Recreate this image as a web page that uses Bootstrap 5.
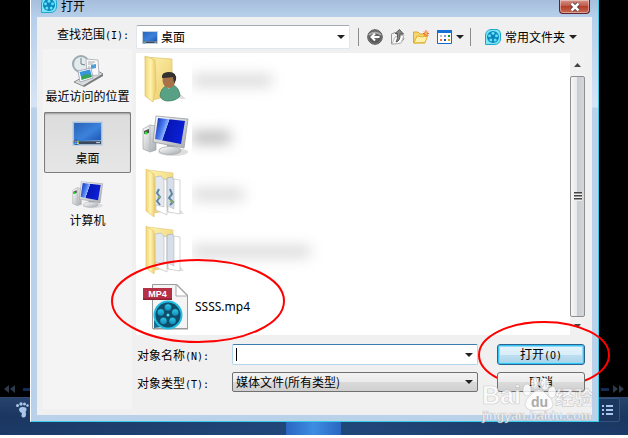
<!DOCTYPE html>
<html lang="zh-CN">
<head>
<meta charset="utf-8">
<meta name="viewport" content="width=device-width, initial-scale=1">
<title>打开</title>
<link href="https://cdn.jsdelivr.net/npm/bootstrap@5.3.0/dist/css/bootstrap.min.css" rel="stylesheet">
<style>
body{font:12px/16px "Noto Sans CJK SC",sans-serif;color:#000;background:#fff}
svg{display:block;flex:none}
button,.btn{font-size:12px;line-height:16px;color:#000}
.desk{display:grid;background:#000}
.desk>*,.deck>*{grid-area:1/1;min-width:0}
.key{font-family:"DejaVu Sans Mono",monospace;font-size:10px}
/* player behind the dialog */
.seek{height:16px;color:#2d3a4c}
.seek-line{width:8px;height:3px;background:#132c55}
.deck{height:38px;background:linear-gradient(90deg,#10244700,#2a66a855 50%,#10244700),linear-gradient(#26436c,#1b365f 50%,#1c3a68);border-top:1px solid #30496c}
.deck-play{width:55px;margin-left:286px;background:linear-gradient(90deg,#2a66c0,#3d8ee2 50%,#2a66c0)}
.deck-tools{height:24px;border:1px solid #34537f;border-radius:2px;background:#1b375f}
.deck-tools button{width:24px;border-right:1px solid #34537f}
/* dialog */
.win{margin:0 29px 13px 30px;border:solid #3ccbe8;border-width:0 1px 1px 1px;border-left-color:#fff;padding:0 6px 6px;background:linear-gradient(#a6c0dd,#b6cfea 17px,#d6e4f5 107px,#bad1ea 108px);z-index:1}
.win-title{height:17px;background:linear-gradient(#a6bedc,#b6cfea)}
.win-title h1{font-size:12px;line-height:12px;margin:0}
.win-close{width:31px;height:14px;margin-right:2px;border:1px solid #5b2430;border-top:0;border-radius:0 0 4px 4px;background:linear-gradient(#d49489,#c05a48 45%,#b03c28 46%,#cb6a52);box-shadow:inset 0 0 0 1px #ffffff66}
.win-body{background:#f0f0f0;padding:0 7px 6px 6px;gap:4px}
.side{width:89px;flex:none}
.side-label{height:32px;padding:9px 0 0 14px}
.places{background:#f4f4f4;padding:1px;gap:1px}
.place{height:61px;padding:5px 0 0;border:0;background:none;white-space:nowrap}
.place span{margin:0 -4px}
.place.active{box-shadow:inset 0 0 0 1px #7b7b7b,inset 0 2px 2px #9a9a9a;border-radius:2px;background:linear-gradient(#dcdcdc,#e6e6e6)}
.place-pic{height:33px;padding-bottom:1px}
.main-col{min-width:0;padding-bottom:17px}
.bar{padding:8px 0 4px}
.look{height:24px;background:#fff;border:1px solid #dfe6ee;border-top-color:#a5a9b0;border-radius:2px;padding-left:5px}
.pick{appearance:none;border:0;background:transparent;font-size:12px;line-height:16px;padding:0 3px;min-width:0;color:#000}
.rule{width:1px;height:18px;background:#8c8c8c}
.rule-last{margin:0 14px 0 6px}
.down{width:0;border:4px solid transparent;border-top-color:#222;border-bottom:0;flex:none}
.files{background:#fff}
.rows{padding:2px 0 4px 6px;gap:9px}
.entry{height:48px;position:relative}
.entry-name{font-family:"Noto Sans",sans-serif;font-size:12px;padding-left:5px}
.hazy{overflow:hidden;height:48px;margin-left:2px}
.hazy i{display:block;height:11px;margin-top:20px;background:#d6d6d6;filter:blur(7px)}
.haze-a i{width:80px}.haze-b i{width:38px;background:#b0b0b0}.haze-c i{width:52px}.haze-d i{width:118px}
.scroller{width:15px;background:#f1f1f1}
.scroller button{height:23px}
.scroller .scroll-end{height:18px}
.thumb{border:1px solid #8f8f8f;border-radius:2px;background:linear-gradient(90deg,#f6f6f6,#e8e9ea 45%,#c9ccd1 50%,#d4d7da)}
.grip{width:8px;height:9px;background:repeating-linear-gradient(#444 0 1px,#999 1px 2px,#eee 2px 3px)}
.fields{padding-top:9px;display:grid;grid-template-columns:96px minmax(0,1fr) 88px;row-gap:7px}
.fields label{height:20px;padding:3px 0 0 1px;white-space:nowrap}
.box{margin-right:19px;height:21px;border:1px solid #b5d5ea;border-top-color:#3d7bad;background:#fff;border-radius:2px;padding:0 4px 0 3px}
.box input{border:0;outline:0;background:none;min-width:0;padding:0;font-size:12px}
.caret{width:1px;height:13px;background:#000}
.box.kind{height:20px;border-color:#707070;background:linear-gradient(#f2f2f2,#ebebeb 50%,#dadada 51%,#cfcfcf);padding-left:0}
.act{height:20px;border:1px solid #707070;border-radius:3px;padding:0;background:linear-gradient(#f4f4f4,#ebebeb 50%,#dcdcdc 51%,#cfcfcf);width:100%}
.act.main{height:21px;border-color:#2c628b;background:linear-gradient(#e6f3fa,#d9eef9 50%,#bfdff1 51%,#a9d2e8);box-shadow:inset 0 0 0 1px #35c4f5,inset 0 0 0 2px #8fdcf7}
.ring{position:absolute;pointer-events:none;overflow:visible}
.ring-file{left:-31px;top:-24px}
.ring-open{left:-19px;top:-23px}
.stamp{position:absolute;left:-15px;top:-2px;pointer-events:none;overflow:visible}
</style>
<script src="https://cdn.jsdelivr.net/npm/bootstrap@5.3.0/dist/js/bootstrap.bundle.min.js"></script>
</head>
<body>
<svg width="0" height="0" class="position-absolute" aria-hidden="true">
<defs>
<linearGradient id="gy" x1="0" x2="1" y2="1"><stop stop-color="#fff3b0"/><stop offset="1" stop-color="#e9ca67"/></linearGradient>
<linearGradient id="gf" x1="0" x2="1"><stop stop-color="#f0d67c"/><stop offset=".5" stop-color="#fff2ac"/><stop offset="1" stop-color="#eccb68"/></linearGradient>
<linearGradient id="gb" x1="0" x2="1" y2="1"><stop stop-color="#2a63b8"/><stop offset=".55" stop-color="#3b82dc"/><stop offset="1" stop-color="#1c54b0"/></linearGradient>
<linearGradient id="gs" x1="0" x2="1" y2=".3"><stop stop-color="#0a1fae"/><stop offset=".33" stop-color="#4d7ff0"/><stop offset=".45" stop-color="#91b5ff"/><stop offset=".47" stop-color="#0816b4"/><stop offset="1" stop-color="#0a20d6"/></linearGradient>
<linearGradient id="gm" x1="0" x2="1" y2="1"><stop stop-color="#fff"/><stop offset="1" stop-color="#a6aaae"/></linearGradient>
<radialGradient id="gk"><stop stop-color="#777"/><stop offset=".7" stop-color="#555"/><stop offset="1" stop-color="#888"/></radialGradient>
<linearGradient id="gr" y2="1" x2="0"><stop stop-color="#2ccbed"/><stop offset="1" stop-color="#1287b4"/></linearGradient>
<symbol id="reel" viewBox="0 0 16 16"><path d="M6 .5H12Q15.500 1 15.500 5V10Q15 15.500 9 15.500H.5V6Q1 1 6 .5Z" fill="#7fe6f8" stroke="#1fa8cc"/><circle cx="8" cy="8" r="6" fill="#0a86bd"/><g fill="#5fe0f6"><circle cx="8" cy="4.300" r="1.500"/><circle cx="4.500" cy="6.800" r="1.500"/><circle cx="11.500" cy="6.800" r="1.500"/><circle cx="5.800" cy="11" r="1.500"/><circle cx="10.200" cy="11" r="1.500"/></g></symbol>
<symbol id="screen" viewBox="0 0 32 26"><path d="M.5 .5H31.500V25.500H.5Z" fill="#a9bfd8" stroke="#c9d3de"/><path d="M2 2H30V20L2 21Z" fill="url(#gb)"/><path d="M2 21H30V24H2Z" fill="#36495f"/><circle cx="4.500" cy="22" r="3" fill="#2467b8"/><path d="M2.500 20.500h2v1.500h-2z" fill="#f06a33"/><path d="M5 20.500h2v1.500h-2z" fill="#9ad04a"/><path d="M2.500 22.500h2v1.500h-2z" fill="#56c4ff"/><path d="M5 22.500h2v1.500h-2z" fill="#ffda48"/><path d="M25 22h4v1h-4z" fill="#dce7ef"/></symbol>
<symbol id="pc" viewBox="0 0 48 42"><ellipse cx="31" cy="37" rx="15" ry="4" fill="#ddd"/><path d="M1 14L8 10L14 11V35L8 37L1 34Z" fill="url(#gm)" stroke="#a4a6a8" stroke-width=".7"/><path d="M8 10V37" stroke="#b7b9bb"/><path d="M2 16L7 14V18L2 19Z" fill="#4b4f52"/><circle cx="4" cy="18" r="1.500" fill="#2ce62c"/><path d="M25 28L33 30V35H25Z" fill="#9da1a5"/><ellipse cx="28" cy="35.500" rx="11" ry="4" fill="url(#gm)" stroke="#a2a5a8" stroke-width=".7"/><path d="M14 1L46 4L42 33L11 27Z" fill="url(#gm)" stroke="#999ea3" stroke-width=".8"/><path d="M16 3L43 6L39 29L13 24Z" fill="url(#gs)"/></symbol>
<symbol id="docs" viewBox="0 0 40 48"><path d="M20 43L39 45L32 37Z" fill="#ddd"/><path d="M3 1L28 4V40L10 44Z" fill="url(#gy)" stroke="#e0c46c" stroke-width=".6"/><path d="M10 8L16 7L20 12V40L10 37Z" fill="#e3e8ef" stroke="#a8b4c4" stroke-width=".6"/><path d="M19 10L22 11V46L11 41V36L19 38Z" fill="#fff" stroke="#bbb" stroke-width=".6"/><path d="M22 9L27 8L31 13V42L22 38Z" fill="#d5dee9" stroke="#98a6b7" stroke-width=".6"/><path d="M29 10L35 11V45L23 43V37L29 40Z" fill="#fff" stroke="#bbb" stroke-width=".6"/><path d="M1 0L9 5L10 32L9 48L1 42Z" fill="url(#gf)" stroke="#dfc162" stroke-width=".6"/></symbol>
</defs>
</svg>

<div class="desk">
  <footer class="d-flex flex-column justify-content-end">
    <div class="seek d-flex align-items-center justify-content-between">
      <div class="d-flex align-items-center gap-2 ps-1">
        <svg width="11" height="8" viewBox="0 0 11 8"><path d="M5 0V8L0 4ZM11 0V8L6 4Z" fill="currentColor"/></svg><div class="seek-line"></div>
      </div>
      <div class="d-flex align-items-center gap-1 pe-1">
        <div class="seek-line"></div><svg width="11" height="8" viewBox="0 0 11 8"><path d="M0 0V8L5 4ZM6 0V8L11 4Z" fill="currentColor"/></svg>
      </div>
    </div>
    <div class="deck d-grid">
      <div class="d-flex"><div class="deck-play"></div></div>
      <div class="d-flex justify-content-between align-items-center px-2 pb-3">
        <button class="btn border-0 p-0 ms-2" aria-label="足迹"><svg width="13" height="16" viewBox="0 0 13 16" fill="#abc6e8"><circle cx="1.500" cy="3.500" r="1.500"/><circle cx="5" cy="2" r="1.700"/><circle cx="8.500" cy="2" r="1.500"/><circle cx="11.500" cy="3.500" r="1.300"/><path d="M3 7Q4 4.500 7 5Q11 5 10.500 8Q9 9.500 10 12Q10 16 7 15.500Q4.500 15 6 11Q3 10 3 7Z"/></svg></button>
        <div class="deck-tools d-flex"><button class="btn p-0 rounded-0" aria-label="音量"></button><button class="btn p-0 rounded-0" aria-label="全屏"></button><button class="btn p-0 rounded-0" aria-label="设置"></button><button class="btn p-0 d-flex align-items-center justify-content-center border-0" aria-label="播放列表"><svg width="11" height="10" viewBox="0 0 11 10"><path d="M0 1H2M4 1H11M0 5H2M4 5H11M0 9H2M4 9H11" stroke="#a9c7ec" stroke-width="2"/></svg></button></div>
      </div>
    </div>
  </footer>

  <main class="win">
    <header class="win-title d-flex align-items-start">
      <svg width="16" height="13" viewBox="0 3 16 13" class="ms-1"><use href="#reel" width="16" height="16"/></svg>
      <h1 class="fw-normal flex-grow-1 ps-1">打开</h1>
      <button class="win-close p-0 d-flex justify-content-center align-items-center" aria-label="关闭"><svg width="12" height="10" viewBox="0 0 12 10"><path d="M2.500 1.500L9.500 8.500M9.500 1.500L2.500 8.500" stroke="#4f3540" stroke-width="4"/><path d="M2.500 1.500L9.500 8.500M9.500 1.500L2.500 8.500" stroke="#fff" stroke-width="2.500"/></svg></button>
    </header>
    <div class="win-body d-flex">
      <aside class="side d-flex flex-column">
        <label class="side-label" for="look">查找范围<span class="key">(I):</span></label>
        <nav class="places d-flex flex-column flex-grow-1">
          <button class="place d-flex flex-column align-items-center"><div class="place-pic d-flex align-items-center"><svg width="32" height="32" viewBox="0 0 32 32"><circle cx="9" cy="9" r="8" fill="#e4ebee" stroke="#9aaab2" stroke-width="2"/><path d="M9 3V9L13 10" fill="none" stroke="#6d7f88"/><path d="M2 27L24 15L31 19L11 31Z" fill="#d9dcdd" stroke="#8b9092"/><path d="M11 31L31 19V21L12 32Z" fill="#777"/><path d="M14 4L26 5L27 20L15 21Z" fill="#f9f9f9" stroke="#b6bbc0"/><path d="M16 7H23M16 9H21M16 12H18" stroke="#aaa"/><path d="M19 10L24 9V13L19 14Z" fill="#4da0da"/><path d="M6 16L19 13L21 23L8 27Z" fill="#fff" stroke="#aab"/><path d="M7.500 17L18 14.500L19.500 20L9 22Z" fill="#3794df"/><path d="M9 22Q13 17 19.500 20L20 22L9.500 25Z" fill="#39a35c"/></svg></div><span>最近访问的位置</span></button>
          <button class="place active d-flex flex-column align-items-center"><div class="place-pic d-flex align-items-center"><svg width="31" height="25"><use href="#screen"/></svg></div><span>桌面</span></button>
          <button class="place d-flex flex-column align-items-center"><div class="place-pic d-flex align-items-center"><svg width="32" height="28"><use href="#pc"/></svg></div><span>计算机</span></button>
        </nav>
      </aside>

      <section class="main-col flex-grow-1 d-flex flex-column">
        <div class="bar d-flex align-items-center">
          <div class="look d-flex align-items-center flex-grow-1 pe-1"><svg width="16" height="13"><use href="#screen"/></svg><select id="look" class="pick flex-grow-1"><option>桌面</option></select><i class="down"></i></div>
          <div class="rule ms-2"></div>
          <div class="d-flex align-items-center gap-2 ms-2">
            <button class="btn border-0 p-0" aria-label="后退"><svg width="16" height="16" viewBox="0 0 16 16"><circle cx="8" cy="8" r="7.300" fill="url(#gk)" stroke="#555"/><path d="M2 6Q8 1 14 6" stroke="#aaa" stroke-width="2" fill="none"/><path d="M12.500 8H5M8 4.500L4.500 8L8 11.500" stroke="#fff" stroke-width="2" fill="none"/></svg></button>
            <button class="btn border-0 p-0" aria-label="向上"><svg width="14" height="16" viewBox="0 0 14 16"><path d="M.5 5L4 3.500L5 5H11L13 10L9 14.500L.5 15Z" fill="#f3f3f3" stroke="#999"/><path d="M4 8L13 6L10 14L1 15Z" fill="#fff" stroke="#bbb"/><path d="M5 13Q9.500 12 9 5H12.500L8.500 .5L4 4.500H6.500Q7 10 5 13Z" fill="#888" stroke="#444" stroke-width=".8"/></svg></button>
            <button class="btn border-0 p-0" aria-label="新建文件夹"><svg width="16" height="14" viewBox="0 0 16 14"><path d="M.5 13V2H5L7 4H12V13Z" fill="#f7d672" stroke="#dba92b"/><path d="M1 13L4 6L10 7L15 5L12 12.500Z" fill="#fff1a6" stroke="#e0b13a"/><path d="M13 0V7M10 3.500H16M11 1.500L15 5.500M15 1.500L11 5.500" stroke="#f05a2c"/><circle cx="13" cy="3.500" r="1.300" fill="#ffbd47"/></svg></button>
            <button class="btn border-0 p-0 d-flex align-items-center" aria-label="视图"><svg width="15" height="14" viewBox="0 0 15 14" class="me-1"><path d="M.5 .5H14.500V13.500H.5Z" fill="#fff" stroke="#1767c5"/><path d="M0 0H15V3H0Z" fill="#1470d8"/><path d="M3 5h2v2H3z" fill="#bbb"/><path d="M7 5h2v2H7z" fill="#888bdc"/><path d="M11 5h2v2h-2z" fill="#179a2e"/><path d="M3 9h2v2H3z" fill="#f46f4c"/><path d="M7 9h2v2H7z" fill="#174daf"/><path d="M11 9h2v2h-2z" fill="#d5a719"/></svg><i class="down"></i></button>
          </div>
          <div class="rule rule-last"></div>
          <button class="btn border-0 p-0 d-flex align-items-center text-nowrap me-2"><svg width="16" height="16" class="me-1"><use href="#reel"/></svg>常用文件夹<i class="down ms-1"></i></button>
        </div>

        <div class="files d-flex">
          <div class="rows d-flex flex-column flex-grow-1">
            <div class="entry d-flex"><svg width="48" height="48" viewBox="0 0 48 48"><path d="M25 43L44 44L35 36Z" fill="#ddd"/><path d="M3 2L30 4V40L11 45Z" fill="url(#gy)" stroke="#dfc36a" stroke-width=".7"/><path d="M3 1L13 5L14 33L11 47L3 41Z" fill="url(#gf)" stroke="#dfc162" stroke-width=".7"/><path d="M18 41Q19 32 25 31L31 30Q37 32 38 41Q34 46 26 46Q20 46 18 41Z" fill="#58a184" stroke="#327b5b" stroke-width=".7"/><path d="M23 30L27 34L29 29Z" fill="#dfe8e4"/><ellipse cx="27" cy="25" rx="6.500" ry="8" fill="#a77248"/><path d="M20 23Q19 17 27 17Q35 17 34 25L32 28L31 22Q25 23 20 23Z" fill="#333230"/></svg><div class="hazy haze-a flex-grow-1"><i></i></div></div>
            <div class="entry d-flex align-items-center"><svg width="48" height="42"><use href="#pc"/></svg><div class="hazy haze-b flex-grow-1"><i></i></div></div>
            <div class="entry d-flex"><svg width="48" height="48" viewBox="0 0 48 48"><use href="#docs" x="3" width="40" height="48"/><path d="M17 20L15 24L18 28L15 32L18 36M28 20L30 25L27 29L31 33L28 36" fill="none" stroke="#5d86a3" stroke-width="2"/><path d="M16 29L18 27M28 32L31 33" stroke="#8fae6c" stroke-width="2"/></svg><div class="hazy haze-c flex-grow-1"><i></i></div></div>
            <div class="entry d-flex"><svg width="48" height="48" viewBox="0 0 48 48"><use href="#docs" x="3" width="40" height="48"/></svg><div class="hazy haze-d flex-grow-1"><i></i></div></div>
            <div class="entry d-flex align-items-center"><svg width="48" height="48" viewBox="0 0 48 48"><path d="M11 1H35L46 12V46.500H11Z" fill="#999"/><path d="M10.500 1.500H34L45.500 13V45.500H10.500Z" fill="#f4f4f4" stroke="#9a9a9a"/><path d="M34 1.500V13H45.500Z" fill="#fff" stroke="#aaa"/><path d="M12 45V38L15 34L20 44Z" fill="#176f93"/><circle cx="26" cy="32" r="14.500" fill="#22bce2"/><circle cx="26" cy="32" r="12.500" fill="#104d6b"/><g fill="url(#gr)" stroke="#0c3148" stroke-width=".5"><circle cx="26" cy="24.500" r="3.700"/><circle cx="18.800" cy="29.500" r="3.700"/><circle cx="33.200" cy="29.500" r="3.700"/><circle cx="21.500" cy="38" r="3.700"/><circle cx="30.500" cy="38" r="3.700"/></g><circle cx="26" cy="32" r="1.500" fill="#4be0ef"/><path d="M1 5H30V17H1Z" fill="#b63145"/><path d="M1 15.500H30V17H1Z" fill="#8d2033"/><text x="15.500" y="14" text-anchor="middle" font-family="Liberation Sans" font-weight="bold" font-size="9" fill="#fff">MP4</text></svg><span class="entry-name">SSSS.mp4</span>
              <svg class="ring ring-file" width="174" height="85" viewBox="0 0 174 85"><ellipse cx="87" cy="42" rx="86" ry="41" fill="none" stroke="#f00" stroke-width="2"/></svg></div>
          </div>
          <div class="scroller d-flex flex-column">
            <button class="btn border-0 p-0 d-flex align-items-center justify-content-center" aria-label="上滚"><svg width="7" height="4" viewBox="0 0 7 4"><path d="M0 4L3.500 0L7 4Z" fill="#444"/></svg></button>
            <div class="thumb flex-grow-1 d-flex align-items-center justify-content-center"><div class="grip"></div></div>
            <button class="scroll-end btn border-0 p-0 d-flex align-items-center justify-content-center" aria-label="下滚"><svg width="7" height="4" viewBox="0 0 7 4"><path d="M0 0L3.500 4L7 0Z" fill="#444"/></svg></button>
          </div>
        </div>

        <form class="fields">
          <label for="name">对象名称<span class="key">(N):</span></label>
          <div class="box d-flex align-items-center"><i class="caret"></i><input id="name" type="text" class="flex-grow-1"><i class="down"></i></div>
          <div class="position-relative"><button type="button" class="act main d-block">打开<span class="key">(O)</span></button>
            <svg class="ring ring-open" width="132" height="68" viewBox="0 0 132 68"><ellipse cx="66" cy="34" rx="65" ry="33" fill="none" stroke="#f00" stroke-width="2"/></svg></div>
          <label for="kind">对象类型<span class="key">(T):</span></label>
          <div class="box kind d-flex align-items-center"><select id="kind" class="pick flex-grow-1"><option>媒体文件(所有类型)</option></select><i class="down"></i></div>
          <div class="position-relative"><button type="button" class="act d-block">取消</button>
            <svg class="stamp" width="114" height="54" viewBox="0 0 114 54"><g fill="#fff" fill-opacity=".8" stroke="#999" stroke-opacity=".5" stroke-width=".6" font-weight="bold"><text x="0" y="34" font-family="Liberation Sans" font-size="25">Bai</text><ellipse cx="45" cy="20" rx="4" ry="6"/><ellipse cx="53" cy="13" rx="4" ry="6"/><ellipse cx="63" cy="14" rx="4" ry="6"/><ellipse cx="70" cy="22" rx="4" ry="6"/><path d="M57 20Q62 20 65 25Q71 29 71 35Q69 42 57 40Q45 42 43 35Q43 29 49 25Q52 20 57 20Z"/><text x="73" y="35" font-family="Noto Sans CJK SC" font-size="19">经验</text><text x="0" y="50" font-family="Liberation Sans" font-size="12.500">jingyan.baidu.com</text></g><text x="49" y="37" font-family="Liberation Sans" font-size="14" font-weight="bold" fill="#aaa">du</text></svg></div>
        </form>
      </section>
    </div>
  </main>
</div>
</body>
</html>
